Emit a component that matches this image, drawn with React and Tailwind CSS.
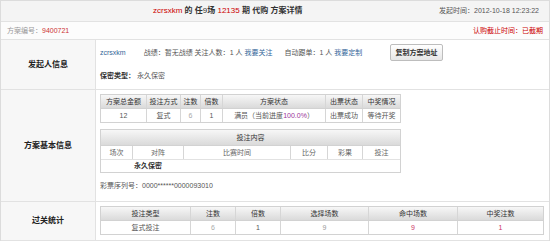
const FONT = 'font-["Liberation_Sans","Noto_Sans_CJK_SC",sans-serif]';

const HEAD = 'bg-gradient-to-b from-[#f7f7f7] to-[#dadada]';

function Cell({ children, className = '' }) {
  return (
    <div className={`flex items-center justify-center border-r border-[#d6d6d6] last:border-r-0 ${className}`}>
      {children}
    </div>
  );
}

function GridTable({ cols, head, rows, width }) {
  return (
    <div className={`${width} border border-[#d2d2d2] bg-white`}>
      <div className={`grid h-[14px] ${cols} ${HEAD} border-b border-[#d2d2d2] text-[#333]`}>
        {head.map((h) => (
          <Cell key={h}>{h}</Cell>
        ))}
      </div>
      {rows.map((r, i) => (
        <div key={i} className={`grid h-[13px] ${cols}`}>
          {r.map((c, j) => (
            <Cell key={j}>{c}</Cell>
          ))}
        </div>
      ))}
    </div>
  );
}

function Section({ label, className = '', children }) {
  return (
    <div className={`flex border-b border-[#e2e2e2] ${className}`}>
      <div className="w-[95px] shrink-0 bg-[#f7f7f7] border-r border-[#e2e2e2] flex items-center justify-center font-bold text-[8px] text-[#222]">
        {label}
      </div>
      <div className="flex-1 min-w-0 pl-[4px]">{children}</div>
    </div>
  );
}

export default function App() {
  return (
    <div className={`w-[550px] h-[243px] bg-white text-[7px] leading-[12px] text-[#555] ${FONT}`}>
      <div className="border border-[#dcdcdc] border-b-0">
        {/* title bar */}
        <div className="h-[21px] bg-[#f4f4f4] border-b border-[#e2e2e2] flex items-center pl-[152px] pr-[10px]">
          <span className="font-bold text-[8px] text-[#333]">
            <span className="text-[#c00] font-normal">zcrsxkm</span> 的 任<span className="font-normal">9</span>场{' '}
            <span className="text-[#c00] font-normal">12135</span> 期 代购 方案详情
          </span>
          <span className="ml-auto text-[#555]">发起时间：2012-10-18 12:23:22</span>
        </div>

        {/* scheme number */}
        <div className="h-[18px] flex items-center px-[6px] border-b border-[#e2e2e2] bg-[#fcfcfc]">
          <span className="text-[#999]">
            方案编号：<span className="text-[#c33]">9400721</span>
          </span>
          <span className="ml-auto text-[#c00]">认购截止时间：已截期</span>
        </div>

        {/* initiator */}
        <Section label="发起人信息" className="h-[50px]">
          <div className="pt-[4px] grid grid-cols-[290px_53px] items-center h-[21px]">
            <div className="flex items-center whitespace-nowrap">
              <span className="text-[#369]">zcrsxkm</span>
              <span className="ml-[18px]">战绩：</span>
              <span>暂无战绩 关注人数：</span>
              <span>1 人&nbsp;</span>
              <span className="text-[#369]">我要关注</span>
              <span className="ml-[12px]">自动跟单：</span>
              <span>1 人&nbsp;</span>
              <span className="text-[#369]">我要定制</span>
            </div>
            <button className="h-[17px] w-[53px] rounded-[2px] border border-[#bdbdbd] bg-gradient-to-b from-[#ffffff] to-[#e6e6e6] font-bold text-[#333] text-[7px]">
              复制方案地址
            </button>
          </div>
          <div className="mt-[9px]">
            <span className="font-bold text-[#333]">保密类型：</span> 永久保密
          </div>
        </Section>

        {/* basic info */}
        <Section label="方案基本信息" className="h-[112px]">
          <div className="pt-[4px]">
            <GridTable
              width="w-[301px]"
              cols="grid-cols-[46px_34px_20px_22px_103px_37px_1fr]"
              head={['方案总金额', '投注方式', '注数', '倍数', '方案状态', '出票状态', '中奖情况']}
              rows={[
                [
                  '12',
                  '复式',
                  <span className="text-[#aaa]">6</span>,
                  '1',
                  <span>
                    满员（当前进度<span className="text-[#939]">100.0%</span>）
                  </span>,
                  '出票成功',
                  '等待开奖',
                ],
              ]}
            />
            <div className="mt-[6px] w-[301px] border border-[#d2d2d2] bg-white">
              <div className={`h-[16px] ${HEAD} border-b border-[#d2d2d2] flex items-center justify-center text-[#333]`}>
                投注内容
              </div>
              <div className="grid h-[14px] grid-cols-[32px_51px_107px_37px_35px_1fr] border-b border-[#e2e2e2] text-[#666]">
                {['场次', '对阵', '比赛时间', '比分', '彩果', '投注'].map((h) => (
                  <Cell key={h}>{h}</Cell>
                ))}
              </div>
              <div className="h-[12px] flex items-center pl-[33px] font-bold text-[#333]">永久保密</div>
            </div>
            <div className="mt-[7px]">彩票序列号：0000******0000093010</div>
          </div>
        </Section>

        {/* pass stats */}
        <Section label="过关统计" className="h-[39px]">
          <div className="pt-[4px]">
            <GridTable
              width="w-[444px]"
              cols="grid-cols-[90px_45px_45px_88px_89px_1fr]"
              head={['投注类型', '注数', '倍数', '选择场数', '命中场数', '中奖注数']}
              rows={[
                [
                  '复式投注',
                  <span className="text-[#aaa]">6</span>,
                  '1',
                  <span className="text-[#999]">9</span>,
                  <span className="text-[#c36]">9</span>,
                  <span className="text-[#c36]">1</span>,
                ],
              ]}
            />
          </div>
        </Section>
      </div>
    </div>
  );
}
